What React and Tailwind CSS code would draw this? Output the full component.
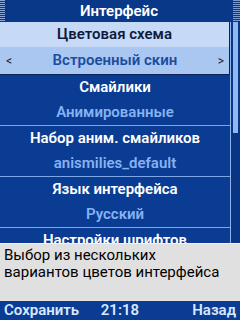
import React from "react";

const items = [
  { label: "Смайлики", value: "Анимированные" },
  { label: "Набор аним. смайликов", value: "anismilies_default" },
  { label: "Язык интерфейса", value: "Русский" },
  { label: "Настройки шрифтов", value: "" },
];

function Stripes({ className }) {
  return (
    <div
      className={
        "h-full bg-[repeating-linear-gradient(180deg,#a9c2ea_0px,#a9c2ea_1px,transparent_1px,transparent_2px)] " +
        className
      }
    />
  );
}

export default function App() {
  return (
    <div className="w-[240px] h-[320px] flex flex-col overflow-hidden bg-[#0b3c93] font-['Roboto',sans-serif] text-[15px]">
      {/* Title bar */}
      <div className="h-[22px] shrink-0 flex items-stretch bg-[#0a3889]">
        <Stripes className="w-[5px] opacity-80" />
        <div className="flex-1 flex items-center justify-center text-white font-semibold leading-none">
          Интерфейс
        </div>
        <Stripes className="w-[7px] opacity-70" />
      </div>

      {/* List + scrollbar */}
      <div className="h-[221px] shrink-0 flex overflow-hidden">
        <div className="w-[231px] shrink-0 border-r border-[#8fb4ec] flex flex-col">
          {/* Highlighted item */}
          <div className="shrink-0 border-r border-b border-[#0d2356] flex flex-col">
            <div className="h-[25px] flex items-center justify-center bg-[#c6daf7] text-[#0e1b3e] font-semibold">
              Цветовая схема
            </div>
            <div className="h-[27px] flex items-center justify-between pl-[6px] pr-[5px] bg-[#aac7f2] text-[#1c4d9e] font-semibold">
              <span className="text-[12px] font-normal text-[#0e1b3e]">&lt;</span>
              <span>Встроенный скин</span>
              <span className="text-[12px] font-normal text-[#0e1b3e]">&gt;</span>
            </div>
          </div>
          {items.map((it) => (
            <div key={it.label} className="h-[51px] shrink-0 border-b border-[#7ea6e6] flex flex-col font-semibold">
              <div className="h-[25px] flex items-center justify-center text-white">{it.label}</div>
              <div className="h-[25px] flex items-center justify-center text-[#86b2f2]">{it.value}</div>
            </div>
          ))}
        </div>
        <div className="flex-1 bg-[#0a3585] pl-[2px]">
          <div className="w-[5px] h-[111px] bg-[#8db8f2]" />
        </div>
      </div>

      {/* Info popup */}
      <div className="h-[58px] shrink-0 bg-[#e0e0e0] border-t border-[#f2f2f2] pt-[3px] px-[4px] text-black leading-[17px]">
        <div>Выбор из нескольких</div>
        <div>вариантов цветов интерфейса</div>
      </div>

      {/* Softkeys */}
      <div className="flex-1 grid grid-cols-3 items-center px-[4px] bg-[#0b3c93] text-[#d9e8ff] font-semibold leading-none">
        <span className="justify-self-start">Сохранить</span>
        <span className="justify-self-center">21:18</span>
        <span className="justify-self-end">Назад</span>
      </div>
    </div>
  );
}
